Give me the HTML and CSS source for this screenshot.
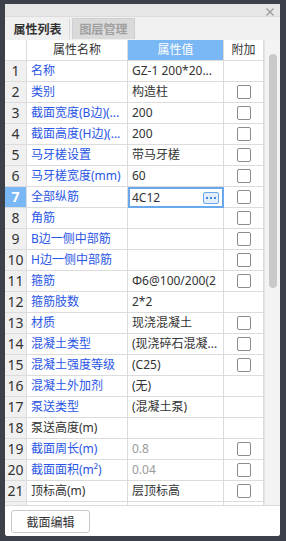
FILE: index.html
```html
<!DOCTYPE html>
<html lang="zh">
<head>
<meta charset="utf-8">
<link rel="stylesheet" href="styles.css">
</head>
<body>
<div class="panel">
  <div class="titlebar">
    <svg class="close" width="8" height="8" viewBox="0 0 8 8"><path d="M0.5 0.5L7.5 7.5M7.5 0.5L0.5 7.5" stroke="#9a9a9a" stroke-width="1.2"/></svg>
  </div>
  <div class="tabs">
    <div class="tab active">属性列表</div>
    <div class="tab">图层管理</div>
  </div>
  <div class="gridwrap">
    <div class="grid">
      <div class="hc num"></div><div class="hc">属性名称</div><div class="hc val">属性值</div><div class="hc">附加</div>

      <div class="c num">1</div><div class="c name">名称</div><div class="c v">GZ-1 200*20...</div><div class="c a"></div>
      <div class="c num">2</div><div class="c name">类别</div><div class="c v">构造柱</div><div class="c a"><span class="cb"></span></div>
      <div class="c num">3</div><div class="c name">截面宽度(B边)(...</div><div class="c v">200</div><div class="c a"><span class="cb"></span></div>
      <div class="c num">4</div><div class="c name">截面高度(H边)(...</div><div class="c v">200</div><div class="c a"><span class="cb"></span></div>
      <div class="c num">5</div><div class="c name">马牙槎设置</div><div class="c v">带马牙槎</div><div class="c a"><span class="cb"></span></div>
      <div class="c num">6</div><div class="c name">马牙槎宽度(mm)</div><div class="c v">60</div><div class="c a"><span class="cb"></span></div>
      <div class="c num sel">7</div><div class="c name">全部纵筋</div><div class="c v edit"><span>4C12</span><span class="dots"><i></i><i></i><i></i></span></div><div class="c a"><span class="cb"></span></div>
      <div class="c num">8</div><div class="c name">角筋</div><div class="c v"></div><div class="c a"><span class="cb"></span></div>
      <div class="c num">9</div><div class="c name">B边一侧中部筋</div><div class="c v"></div><div class="c a"><span class="cb"></span></div>
      <div class="c num">10</div><div class="c name">H边一侧中部筋</div><div class="c v"></div><div class="c a"><span class="cb"></span></div>
      <div class="c num">11</div><div class="c name">箍筋</div><div class="c v">Φ6@100/200(2</div><div class="c a"><span class="cb"></span></div>
      <div class="c num">12</div><div class="c name">箍筋肢数</div><div class="c v">2*2</div><div class="c a"></div>
      <div class="c num">13</div><div class="c name">材质</div><div class="c v">现浇混凝土</div><div class="c a"><span class="cb"></span></div>
      <div class="c num">14</div><div class="c name">混凝土类型</div><div class="c v">(现浇碎石混凝...</div><div class="c a"><span class="cb"></span></div>
      <div class="c num">15</div><div class="c name">混凝土强度等级</div><div class="c v">(C25)</div><div class="c a"><span class="cb"></span></div>
      <div class="c num">16</div><div class="c name">混凝土外加剂</div><div class="c v">(无)</div><div class="c a"></div>
      <div class="c num">17</div><div class="c name">泵送类型</div><div class="c v">(混凝土泵)</div><div class="c a"></div>
      <div class="c num">18</div><div class="c name black">泵送高度(m)</div><div class="c v"></div><div class="c a"></div>
      <div class="c num">19</div><div class="c name">截面周长(m)</div><div class="c v gray">0.8</div><div class="c a"><span class="cb"></span></div>
      <div class="c num">20</div><div class="c name">截面面积(m²)</div><div class="c v gray">0.04</div><div class="c a"><span class="cb"></span></div>
      <div class="c num">21</div><div class="c name black">顶标高(m)</div><div class="c v">层顶标高</div><div class="c a"><span class="cb"></span></div>
      <div class="c num"></div><div class="c name"></div><div class="c v"></div><div class="c a"></div>
    </div>
    <div class="scroll"><div class="thumb"></div></div>
  </div>
  <div class="footer">
    <button class="btn">截面编辑</button>
  </div>
</div>
</body>
</html>
```
FILE: styles.css
```css
html, body {
  margin: 0;
  padding: 0;
  background: #3c4149;
  width: 286px;
  height: 541px;
  overflow: hidden;
  font-family: "Noto Sans", "Noto Sans CJK SC", sans-serif;
  font-size: 12px;
}
.panel {
  margin: 4px 6px 0 5px;
  width: 275px;
  height: 532px;
  background: #ffffff;
  display: flex;
  flex-direction: column;
  border-radius: 0 0 3px 3px;
  overflow: hidden;
}
.titlebar {
  height: 12px;
  background: #e6e6e6;
  display: flex;
  justify-content: flex-end;
  align-items: flex-start;
  padding-right: 6px;
  border-bottom: 1px solid #dcdcdc;
}
.close {
  margin-top: 4px;
}
.tabs {
  height: 22px;
  background: #f0f0f0;
  display: flex;
  gap: 2px;
  padding-top: 1px;
}
.tab {
  width: 63px;
  height: 21px;
  line-height: 21px;
  text-align: center;
  font-weight: bold;
  font-size: 12px;
  color: #a0a0a0;
  background: #dadada;
  border: 1px solid #cfcfcf;
  border-bottom: none;
  box-sizing: border-box;
}
.tab.active {
  width: 65px;
  color: #333333;
  background: #f0f0f0;
  border-color: #f0f0f0;
  border-right-color: #d8d8d8;
}
.gridwrap {
  height: 466px;
  display: flex;
  border-bottom: 1px solid #dcdcdc;
  box-sizing: border-box;
  overflow: hidden;
}
.grid {
  width: 259px;
  display: grid;
  grid-template-columns: 22px 101px 96px 40px;
  grid-auto-rows: 21px;
  align-content: start;
}
.hc, .c {
  box-sizing: border-box;
  border-right: 1px solid #dcdcdc;
  border-bottom: 1px solid #dcdcdc;
  line-height: 20px;
  white-space: nowrap;
  overflow: hidden;
}
.hc {
  text-align: center;
  color: #333333;
  background: #ffffff;
}
.hc.val {
  background: #7ab7f5;
  color: #ffffff;
}
.num {
  background: #f0f0f0;
  text-align: center;
  font-size: 14px;
  color: #333333;
  padding: 0;
}
.hc.num {
  background: #ffffff;
}
.num.sel {
  background: #7ab7f5;
  color: #ffffff;
  font-weight: bold;
}
.name {
  color: #2a56e6;
  padding: 0 4px;
}
.name.black {
  color: #333333;
}
.v {
  color: #333333;
  padding: 0 3px 0 4px;
}
.v.gray {
  color: #9a9a9a;
}
.v.edit {
  border: 2px solid #6aa8ee;
  line-height: 17px;
  padding: 0 3px 0 2px;
  display: flex;
  justify-content: space-between;
  align-items: center;
}
.dots {
  width: 16px;
  height: 12px;
  box-sizing: border-box;
  border: 1px solid #6aa8ee;
  border-radius: 2px;
  background: #e4eefb;
  display: flex;
  justify-content: center;
  align-items: center;
  gap: 2px;
}
.dots i {
  width: 2px;
  height: 2px;
  background: #3b86e6;
  display: block;
}
.a {
  display: flex;
  justify-content: center;
  align-items: center;
}
.cb {
  width: 14px;
  height: 14px;
  box-sizing: border-box;
  border: 1px solid #8c8c8c;
  border-radius: 2px;
  background: #ffffff;
  display: block;
}
.scroll {
  width: 16px;
  background: #f3f3f3;
  border-left: 1px solid #e4e4e4;
  box-sizing: border-box;
  padding: 14px 0 0 4px;
}
.thumb {
  width: 8px;
  height: 234px;
  background: #c9c9c9;
  border-radius: 4px;
}
.footer {
  flex: 1;
  background: #ffffff;
  padding: 4px 0 0 6px;
}
.btn {
  width: 79px;
  height: 23px;
  border: 1px solid #c8c8c8;
  border-radius: 3px;
  background: #ffffff;
  font-family: "Noto Sans", "Noto Sans CJK SC", sans-serif;
  font-size: 12px;
  color: #333333;
  padding: 0;
  margin: 0;
}
```
